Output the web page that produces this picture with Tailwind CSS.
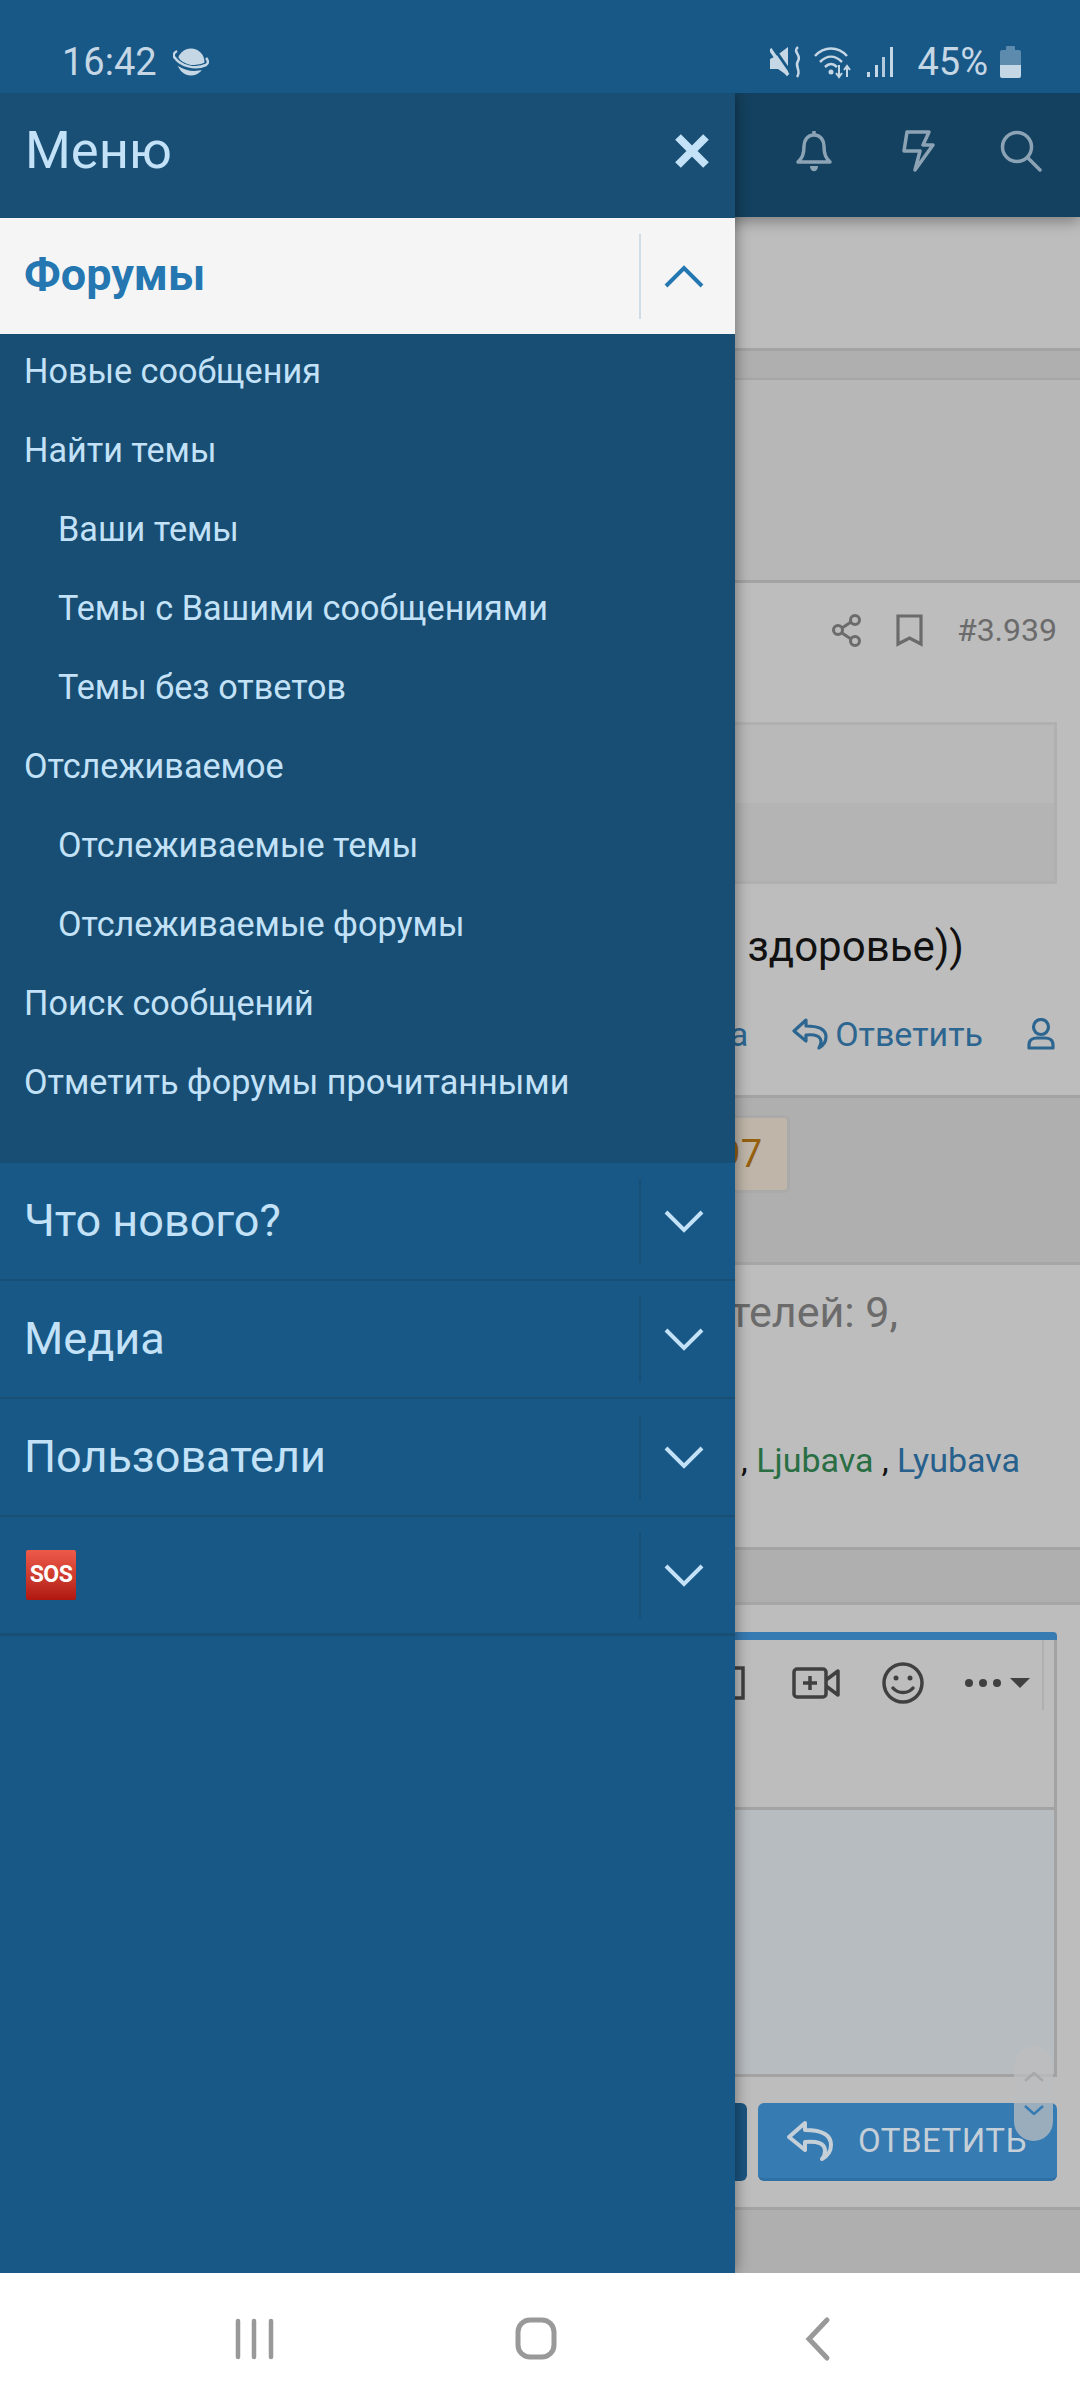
<!DOCTYPE html>
<html lang="ru">

<head>
    <meta charset="UTF-8">
    <title>Меню</title>
    <script src="https://cdn.jsdelivr.net/npm/@tailwindcss/browser@4"></script>
</head>

<body class="bg-white">
    <div class="w-[1080px] h-[2400px] flex flex-col overflow-hidden font-['Roboto',sans-serif]">

        <!-- status bar -->
        <div class="h-[93px] shrink-0 bg-[#185886] flex items-end justify-between pb-[9px] pl-[62px] pr-[59px] text-[38px] leading-[44px] text-[#c5d6e4]">
            <div class="flex items-center gap-[16px]">
                <span>16:42</span>
                <svg class="w-[36px] h-[30px]" viewBox="0 0 36 30" fill="none">
                    <circle cx="18" cy="15" r="13.500" fill="#c5d6e4" />
                    <path d="M1 8C4 19 20 25 34 18" stroke="#185886" stroke-width="6" />
                    <path d="M4 4C0 6 0 9 2 11c6 8 20 12 31 7 3-2 2-5 0-7" stroke="#c5d6e4" stroke-width="2.500" />
                </svg>
            </div>
            <div class="flex items-center">
                <svg class="w-[32px] h-[32px] mr-[11px]" viewBox="0 0 32 32" fill="none">
                    <path d="M0 13l6-3L18 1v29L8 23H0z" fill="#c5d6e4" />
                    <path d="M3 1l18 26" stroke="#185886" stroke-width="3" />
                    <path d="M0 3l18 26" stroke="#c5d6e4" stroke-width="3.500" />
                    <path d="M28 1c-6 5 4 8 0 14s4 9-1 16" stroke="#c5d6e4" stroke-width="2.500" />
                </svg>
                <svg class="w-[38px] h-[34px] mr-[16px]" viewBox="0 0 38 34" fill="none" stroke="#c5d6e4" stroke-width="2.500">
                    <path d="M2 11C11 1 25 1 34 11" />
                    <path d="M7 17c7-7 15-7 22 0" />
                    <path d="M12 22c4-4 8-4 12 0" />
                    <circle cx="18" cy="27" r="2.500" fill="#c5d6e4" stroke="none" />
                    <path d="M26 20v12M23 28l3 4 3-4" stroke-width="2" />
                    <path d="M34 32V21M31 25l3-4 3 4" stroke-width="2" />
                </svg>
                <svg class="w-[26px] h-[30px] mr-[24px]" viewBox="0 0 26 30" fill="#c5d6e4">
                    <rect x="0" y="25" width="3" height="5" />
                    <rect x="8" y="18" width="3" height="12" />
                    <rect x="15" y="10" width="3" height="20" opacity="0.9" />
                    <rect x="23" y="0" width="3" height="30" />
                </svg>
                <span class="mr-[12px]">45%</span>
                <div class="w-[21px] h-[32px] flex flex-col items-center">
                    <div class="w-[9px] h-[4px] bg-[#5d8bae] rounded-t-[1px]"></div>
                    <div class="w-full h-[15px] bg-[#5d8bae] rounded-t-[2px]"></div>
                    <div class="w-full h-[13px] bg-[#c5d6e4] rounded-b-[2px]"></div>
                </div>
            </div>
        </div>

        <!-- page behind the drawer -->
        <div class="relative flex-1 bg-[#afafaf] flex flex-col overflow-hidden">

            <div class="h-[124px] shrink-0 bg-[#14415f] flex items-center justify-end pr-[38px] pb-[8px] shadow-[0_4px_14px_rgba(0,0,0,0.35)] relative">
                <svg class="w-[38px] h-[42px] mr-[69px]" viewBox="0 0 38 42" fill="none" stroke="#8ba3b5" stroke-width="3.500">
                    <path d="M19 5c-7 0-10 6-10 11 0 9-2 12-6 16h32c-4-4-6-7-6-16 0-5-3-11-10-11z" stroke-linejoin="round" />
                    <path d="M19 1v4" />
                    <path d="M15 36c0 7 8 7 8 0z" fill="#8ba3b5" stroke="none" />
                </svg>
                <svg class="w-[33px] h-[42px] mr-[65px]" viewBox="0 0 33 42" fill="none" stroke="#8ba3b5" stroke-width="3.500" stroke-linejoin="round">
                    <path d="M5 2h22l-6 13h10L13 40l5-19H2z" />
                </svg>
                <svg class="w-[42px] h-[42px]" viewBox="0 0 42 42" fill="none" stroke="#8ba3b5" stroke-width="3.500" stroke-linecap="round">
                    <circle cx="17" cy="17" r="14.500" />
                    <path d="M28 28l12 12" />
                </svg>
            </div>

            <div class="h-[134px] shrink-0 bg-[#bdbdbd] border-b-[3px] border-[#a3a3a3]"></div>
            <div class="h-[29px] shrink-0 bg-[#afafaf] border-b-[2px] border-[#a6a6a6]"></div>
            <div class="h-[203px] shrink-0 bg-[#b7b7b7] border-b-[3px] border-[#a3a3a3]"></div>

            <!-- post -->
            <div class="h-[515px] shrink-0 bg-[#bdbdbd] border-b-[3px] border-[#a3a3a3] flex flex-col">
                <div class="h-[139px] flex items-center justify-end pr-[23px] pb-[45px] text-[#6b6b6b] text-[32px]">
                    <svg class="w-[30px] h-[33px] mr-[34px]" viewBox="0 0 30 33" fill="none" stroke="#6b6b6b" stroke-width="3">
                        <circle cx="23" cy="6" r="4.500" />
                        <circle cx="6" cy="16" r="4.500" />
                        <circle cx="23" cy="27" r="4.500" />
                        <path d="M10 14l9-6M10 19l9 6" />
                    </svg>
                    <svg class="w-[27px] h-[33px] mr-[34px]" viewBox="0 0 27 33" fill="none" stroke="#6b6b6b" stroke-width="3.200">
                        <path d="M2 2h23v28l-11.500-6L2 30z" />
                    </svg>
                    <span>#3.939</span>
                </div>
                <div class="h-[162px] mr-[23px] border-[3px] border-[#b0b0b0] flex flex-col">
                    <div class="h-[78px] bg-[#b9b9b9]"></div>
                    <div class="flex-1 bg-[#b4b4b4]"></div>
                </div>
                <div class="h-[124px] flex items-center justify-end pr-[116px] text-[42px] text-[#111111]">здоровье))</div>
                <div class="h-[52px] flex items-center justify-end pr-[25px] text-[34px] text-[#2c6690]">
                    <span class="mr-[44px]">Цитата</span>
                    <svg class="w-[36px] h-[32px] mr-[7px]" viewBox="0 0 36 32" fill="none" stroke="#2c6690" stroke-width="3.200" stroke-linejoin="round" stroke-linecap="round">
                        <path d="M14 2L2 13l12 10v-6c9-1 15 1 15 7 0 2-1 4-2 6 5-3 7-7 7-11 0-8-8-11-20-11z" />
                    </svg>
                    <span class="mr-[44px]">Ответить</span>
                    <svg class="w-[28px] h-[32px]" viewBox="0 0 28 32" fill="none" stroke="#2c6690" stroke-width="3.200">
                        <circle cx="14" cy="9" r="7.500" />
                        <path d="M2 30v-3c0-5 4-7 8-7h8c4 0 8 2 8 7v3z" stroke-linejoin="round" />
                    </svg>
                </div>
            </div>

            <!-- badge band -->
            <div class="h-[167px] shrink-0 bg-[#afafaf] border-b-[3px] border-[#a6a6a6] pt-[17px]">
                <div class="ml-[600px] w-[190px] h-[78px] bg-[#bfb6a9] border-[3px] border-[#aaaaaa] rounded-[6px] flex items-center justify-end pr-[25px] text-[38px] text-[#95600f]">3 597</div>
            </div>

            <!-- online users -->
            <div class="h-[285px] shrink-0 bg-[#bdbdbd] border-b-[3px] border-[#a3a3a3] flex flex-col">
                <div class="h-[94px] flex items-center justify-end pr-[182px] text-[43px] text-[#6b6b6b]">Пользователей: 9,</div>
                <div class="mt-[81px] flex justify-end pr-[60px] text-[34px] leading-[40px] text-[#111111]">
                    <span>,&nbsp;</span><span class="text-[#2a6e44]">Ljubava</span><span>&nbsp;,&nbsp;</span><span class="text-[#27608c]">Lyubava</span>
                </div>
            </div>

            <div class="h-[55px] shrink-0 bg-[#afafaf] border-b-[3px] border-[#a6a6a6]"></div>

            <!-- editor -->
            <div class="h-[605px] shrink-0 bg-[#bdbdbd] border-b-[3px] border-[#a3a3a3] pt-[27px] pr-[23px] flex flex-col">
                <div class="h-[8px] bg-[#377bb3] rounded-tr-[4px]"></div>
                <div class="h-[170px] border-r-[3px] border-b-[3px] border-[#a3a3a3] pr-[10px]">
                    <div class="h-[70px] pt-[16px] border-r-[2px] border-[#b0b0b0] flex items-center justify-end pr-[12px]">
                        <svg class="w-[16px] h-[34px] mr-[47px]" viewBox="0 0 16 34" fill="none" stroke="#404040" stroke-width="3.500">
                            <path d="M0 2h14v30H0" />
                            <path d="M0 24l5 4" />
                        </svg>
                        <svg class="w-[48px] h-[32px] mr-[42px]" viewBox="0 0 48 32" fill="none" stroke="#404040" stroke-width="3.500" stroke-linejoin="round">
                            <rect x="2" y="2" width="32" height="28" rx="3" />
                            <path d="M34 13l12-9v24l-12-9" />
                            <path d="M18 9v14M11 16h14" />
                        </svg>
                        <svg class="w-[42px] h-[42px] mr-[41px]" viewBox="0 0 42 42" fill="none" stroke="#404040" stroke-width="3.500">
                            <circle cx="21" cy="21" r="19" />
                            <circle cx="14" cy="16" r="2.500" fill="#404040" stroke="none" />
                            <circle cx="28" cy="16" r="2.500" fill="#404040" stroke="none" />
                            <path d="M11 26c5 6 15 6 20 0" stroke-linecap="round" />
                        </svg>
                        <div class="flex items-center gap-[6px]">
                            <span class="w-[8px] h-[8px] rounded-full bg-[#404040]"></span>
                            <span class="w-[8px] h-[8px] rounded-full bg-[#404040]"></span>
                            <span class="w-[8px] h-[8px] rounded-full bg-[#404040]"></span>
                            <svg class="w-[20px] h-[10px] ml-[3px]" viewBox="0 0 20 10" fill="#404040">
                                <path d="M0 0h20L10 10z" />
                            </svg>
                        </div>
                    </div>
                </div>
                <div class="h-[267px] bg-[#b7bcc0] border-r-[3px] border-b-[3px] border-[#a3a3a3]"></div>
                <div class="mt-[26px] flex justify-end gap-[11px]">
                    <div class="w-[300px] h-[78px] bg-[#1b5580] rounded-[6px]"></div>
                    <div class="w-[299px] h-[78px] bg-[#377bb3] border-b-[3px] border-[#2f70a6] rounded-[6px] flex items-center pl-[28px] text-[33px] tracking-[0.5px] text-[#c5cfd8]">
                        <svg class="w-[47px] h-[42px] mr-[25px]" viewBox="0 0 47 42" fill="none" stroke="#c5cfd8" stroke-width="4" stroke-linejoin="round" stroke-linecap="round">
                            <path d="M19 3L3 17l16 13v-8c12-1 20 1 20 9 0 3-1 6-3 8 7-4 9-9 9-14 0-11-11-15-26-15z" />
                        </svg>
                        <span>ОТВЕТИТЬ</span>
                    </div>
                </div>
            </div>

            <!-- scroll buttons -->
            <div class="absolute left-[1014px] top-[1953px] w-[39px] h-[95px] rounded-[20px] bg-[#bcbebf]/75 flex flex-col items-center justify-between pt-[26px] pb-[26px]">
                <svg class="w-[20px] h-[10px]" viewBox="0 0 20 10" fill="none" stroke="#a8a8a8" stroke-width="2.500"><path d="M1 9l9-8 9 8" /></svg>
                <svg class="w-[20px] h-[10px]" viewBox="0 0 20 10" fill="none" stroke="#377bb3" stroke-width="2.500"><path d="M1 1l9 8 9-8" /></svg>
            </div>

            <!-- drawer -->
            <div class="absolute left-0 inset-y-0 w-[735px] bg-[#185886] flex flex-col shadow-[0_0_14px_rgba(0,0,0,0.45)] text-[#c3e2f8]">
                <div class="h-[125px] shrink-0 bg-[#194f75] flex items-center justify-between pl-[25px] pr-[26px] pb-[10px] text-[52.500px]">
                    <span>Меню</span>
                    <svg class="w-[34px] h-[34px]" viewBox="0 0 34 34" fill="none" stroke="#c3e2f8" stroke-width="8">
                        <path d="M3 3l28 28M31 3L3 31" />
                    </svg>
                </div>

                <div class="h-[116px] shrink-0 bg-[#f5f5f5] flex items-center">
                    <span class="flex-1 pl-[24px] pb-[2px] text-[45px] font-bold text-[#2577b1]">Форумы</span>
                    <div class="w-[96px] h-[85px] pr-[8px] border-l-[2px] border-[#cfdde8] flex items-center justify-center">
                        <svg class="w-[40px] h-[23px]" viewBox="0 0 40 23" fill="none" stroke="#2577b1" stroke-width="4">
                            <path d="M2 21L20 3l18 18" />
                        </svg>
                    </div>
                </div>

                <div class="h-[829px] shrink-0 bg-[#184e74] flex flex-col text-[34.200px] leading-[79px]">
                    <div class="pl-[24px] -mt-[2px]">Новые сообщения</div>
                    <div class="pl-[24px]">Найти темы</div>
                    <div class="pl-[58px]">Ваши темы</div>
                    <div class="pl-[58px]">Темы с Вашими сообщениями</div>
                    <div class="pl-[58px]">Темы без ответов</div>
                    <div class="pl-[24px]">Отслеживаемое</div>
                    <div class="pl-[58px]">Отслеживаемые темы</div>
                    <div class="pl-[58px]">Отслеживаемые форумы</div>
                    <div class="pl-[24px]">Поиск сообщений</div>
                    <div class="pl-[24px]">Отметить форумы прочитанными</div>
                </div>

                <div class="h-[118px] shrink-0 border-b-[2px] border-[#194f75] flex items-center">
                    <span class="flex-1 pl-[24px] text-[45px]">Что нового?</span>
                    <div class="w-[96px] h-[85px] pr-[8px] border-l-[2px] border-[#194f75] flex items-center justify-center">
                        <svg class="w-[40px] h-[23px]" viewBox="0 0 40 23" fill="none" stroke="#c3e2f8" stroke-width="4"><path d="M2 2l18 18L38 2" /></svg>
                    </div>
                </div>
                <div class="h-[118px] shrink-0 border-b-[2px] border-[#194f75] flex items-center">
                    <span class="flex-1 pl-[24px] text-[45px]">Медиа</span>
                    <div class="w-[96px] h-[85px] pr-[8px] border-l-[2px] border-[#194f75] flex items-center justify-center">
                        <svg class="w-[40px] h-[23px]" viewBox="0 0 40 23" fill="none" stroke="#c3e2f8" stroke-width="4"><path d="M2 2l18 18L38 2" /></svg>
                    </div>
                </div>
                <div class="h-[118px] shrink-0 border-b-[2px] border-[#194f75] flex items-center">
                    <span class="flex-1 pl-[24px] text-[45px]">Пользователи</span>
                    <div class="w-[96px] h-[85px] pr-[8px] border-l-[2px] border-[#194f75] flex items-center justify-center">
                        <svg class="w-[40px] h-[23px]" viewBox="0 0 40 23" fill="none" stroke="#c3e2f8" stroke-width="4"><path d="M2 2l18 18L38 2" /></svg>
                    </div>
                </div>
                <div class="h-[119px] shrink-0 border-b-[3px] border-[#194f75] flex items-center">
                    <div class="flex-1 pl-[26px]">
                        <div class="w-[50px] h-[50px] bg-linear-to-b from-[#ee5a4a] to-[#b0170f] rounded-[2px] flex items-center justify-center text-[23px] font-bold tracking-[-0.5px] text-white">SOS</div>
                    </div>
                    <div class="w-[96px] h-[85px] pr-[8px] border-l-[2px] border-[#194f75] flex items-center justify-center">
                        <svg class="w-[40px] h-[23px]" viewBox="0 0 40 23" fill="none" stroke="#c3e2f8" stroke-width="4"><path d="M2 2l18 18L38 2" /></svg>
                    </div>
                </div>
            </div>
        </div>

        <!-- android nav -->
        <div class="h-[127px] shrink-0 bg-white flex items-center justify-center">
            <svg class="w-[1080px] h-[127px]" viewBox="0 0 1080 127" fill="none" stroke="#999999">
                <path d="M238 48v36M254 48v36M271 48v36" stroke-width="4.500" stroke-linecap="round" />
                <rect x="518" y="47" width="36" height="37" rx="12" stroke-width="5" />
                <path d="M827 47l-18 19 18 19" stroke-width="5" stroke-linecap="round" />
            </svg>
        </div>
    </div>
</body>

</html>
